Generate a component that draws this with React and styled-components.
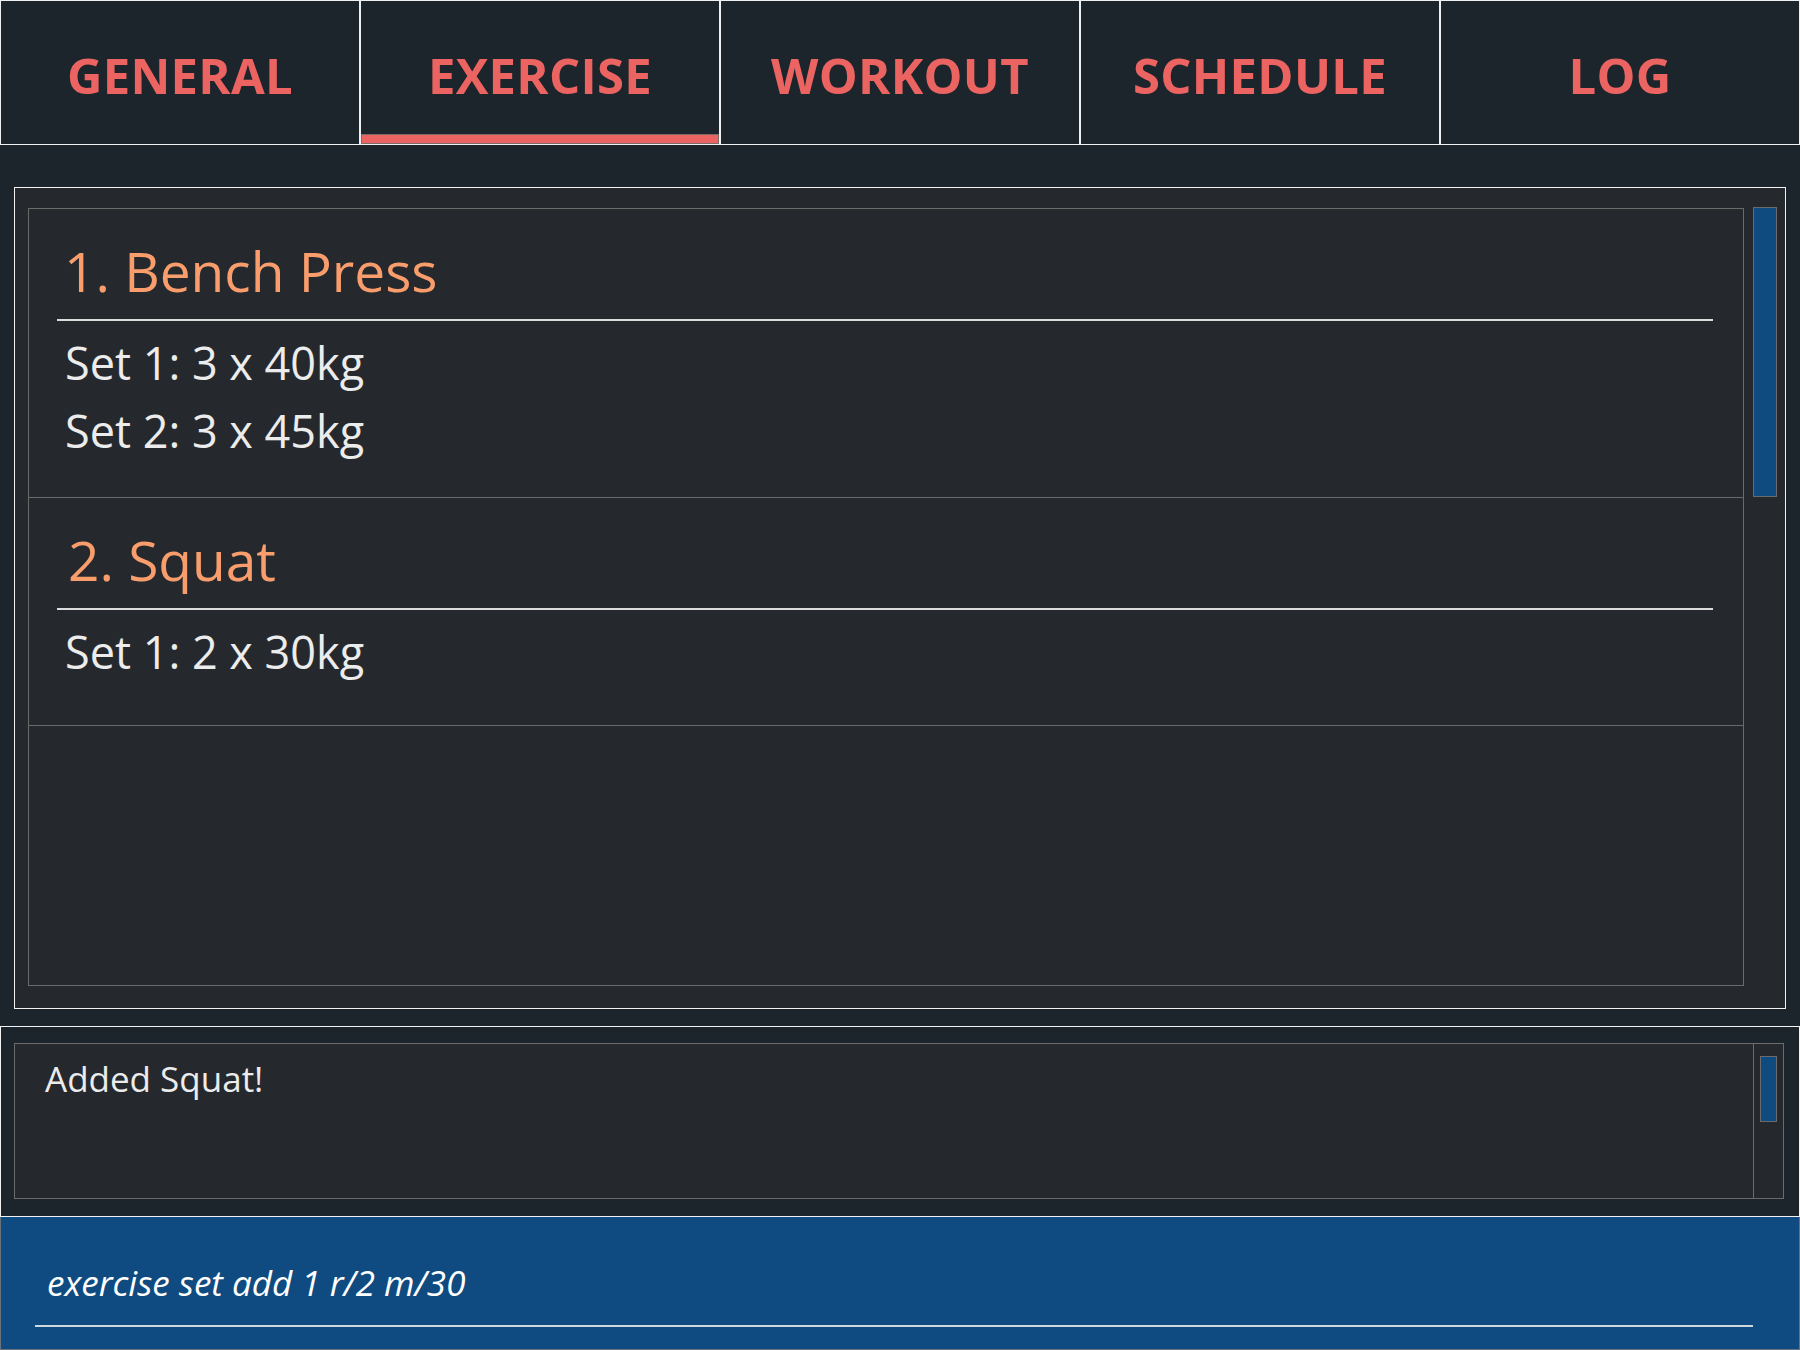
import React from "react";
import styled, { createGlobalStyle } from "styled-components";

const GlobalStyle = createGlobalStyle`
  html, body {
    margin: 0;
    padding: 0;
    background: #1c252c;
  }
  body {
    font-family: "Open Sans", "Liberation Sans", sans-serif;
  }
  * { box-sizing: border-box; }
`;

const Page = styled.div`
  width: 1800px;
  height: 1350px;
  display: flex;
  flex-direction: column;
  background: #1c252c;
  overflow: hidden;
`;

const TabBar = styled.div`
  display: grid;
  grid-template-columns: repeat(5, 1fr);
  height: 145px;
  flex: none;
`;

const Tab = styled.div`
  position: relative;
  display: flex;
  align-items: center;
  justify-content: center;
  padding-top: 5px;
  border: 1px solid #eef0f1;
  background: #1c252c;
  color: #ec6461;
  font-weight: 700;
  font-size: 49px;
  letter-spacing: 0.3px;
`;

const Indicator = styled.div`
  position: absolute;
  left: 0;
  right: 0;
  bottom: 0;
  height: 10px;
  background: #ec6461;
  border: 1px solid #7a6a6a;
`;

const MainPanel = styled.div`
  margin: 42px 14px 0 14px;
  height: 822px;
  flex: none;
  display: flex;
  gap: 9px;
  padding: 20px 8px 22px 13px;
  border: 1px solid #f2f2f2;
  background: #25292d;
`;

const List = styled.div`
  flex: 1;
  border: 1px solid #6b6b6b;
  display: flex;
  flex-direction: column;
`;

const Card = styled.div`
  padding: 25px 30px 32px 28px;
  border-bottom: 1px solid #6b6b6b;
  min-height: ${(p) => p.$minH || 0}px;
`;

const Title = styled.div`
  font-size: 55px;
  line-height: 74px;
  color: #f89d6b;
  padding: 0 0 11px ${(p) => 7 + (p.$indent || 0)}px;
  border-bottom: 2px solid #dcdcdc;
`;

const Sets = styled.div`
  margin-top: 8px;
`;

const SetLine = styled.div`
  font-size: 45px;
  line-height: 68px;
  color: #ececec;
  padding-left: 8px;
`;

const ScrollTrack = styled.div`
  flex: none;
  width: ${(p) => p.$w}px;
  display: flex;
  flex-direction: column;
  padding: ${(p) => p.$pad};
  border-left: ${(p) => (p.$line ? "1px solid #6b6b6b" : "none")};
`;

const Thumb = styled.div`
  width: 100%;
  height: ${(p) => p.$h}px;
  margin-top: ${(p) => p.$top || 0}px;
  background: #104b80;
  border: 1px solid #6b6b6b;
`;

const ResultSection = styled.div`
  margin-top: 17px;
  height: 191px;
  flex: none;
  border: 1px solid #f2f2f2;
  padding: 16px 15px 17px 13px;
  background: #1c252c;
`;

const ResultBox = styled.div`
  height: 100%;
  display: flex;
  border: 1px solid #6b6b6b;
  background: #25292d;
`;

const ResultText = styled.div`
  flex: 1;
  padding: 11px 0 0 30px;
  font-size: 35px;
  line-height: 48px;
  color: #ececec;
`;

const CommandBox = styled.div`
  flex: none;
  height: 133px;
  background: #0f4b80;
  border: 1px solid #68737d;
  border-top: none;
  padding: 43px 46px 0 34px;
`;

const CommandField = styled.div`
  padding: 0 0 19px 12px;
  border-bottom: 2px solid #cfd8df;
  font-size: 35px;
  line-height: 46px;
  font-style: italic;
  color: #ffffff;
`;

const tabs = ["GENERAL", "EXERCISE", "WORKOUT", "SCHEDULE", "LOG"];

const exercises = [
  { title: "1. Bench Press", sets: ["Set 1: 3 x 40kg", "Set 2: 3 x 45kg"] },
  { title: "2. Squat", sets: ["Set 1: 2 x 30kg"], minH: 228, indent: 4 },
];

export default function App() {
  return (
    <>
      <GlobalStyle />
      <Page>
        <TabBar>
          {tabs.map((t) => (
            <Tab key={t}>
              {t}
              {t === "EXERCISE" && <Indicator />}
            </Tab>
          ))}
        </TabBar>

        <MainPanel>
          <List>
            {exercises.map((ex) => (
              <Card key={ex.title} $minH={ex.minH}>
                <Title $indent={ex.indent}>{ex.title}</Title>
                <Sets>
                  {ex.sets.map((s) => (
                    <SetLine key={s}>{s}</SetLine>
                  ))}
                </Sets>
              </Card>
            ))}
          </List>
          <ScrollTrack $w={24} $pad="0">
            <Thumb $h={290} $top={-1} />
          </ScrollTrack>
        </MainPanel>

        <ResultSection>
          <ResultBox>
            <ResultText>Added Squat!</ResultText>
            <ScrollTrack $w={30} $pad="12px 6px 0 6px" $line>
              <Thumb $h={66} />
            </ScrollTrack>
          </ResultBox>
        </ResultSection>

        <CommandBox>
          <CommandField>exercise set add 1 r/2 m/30</CommandField>
        </CommandBox>
      </Page>
    </>
  );
}
